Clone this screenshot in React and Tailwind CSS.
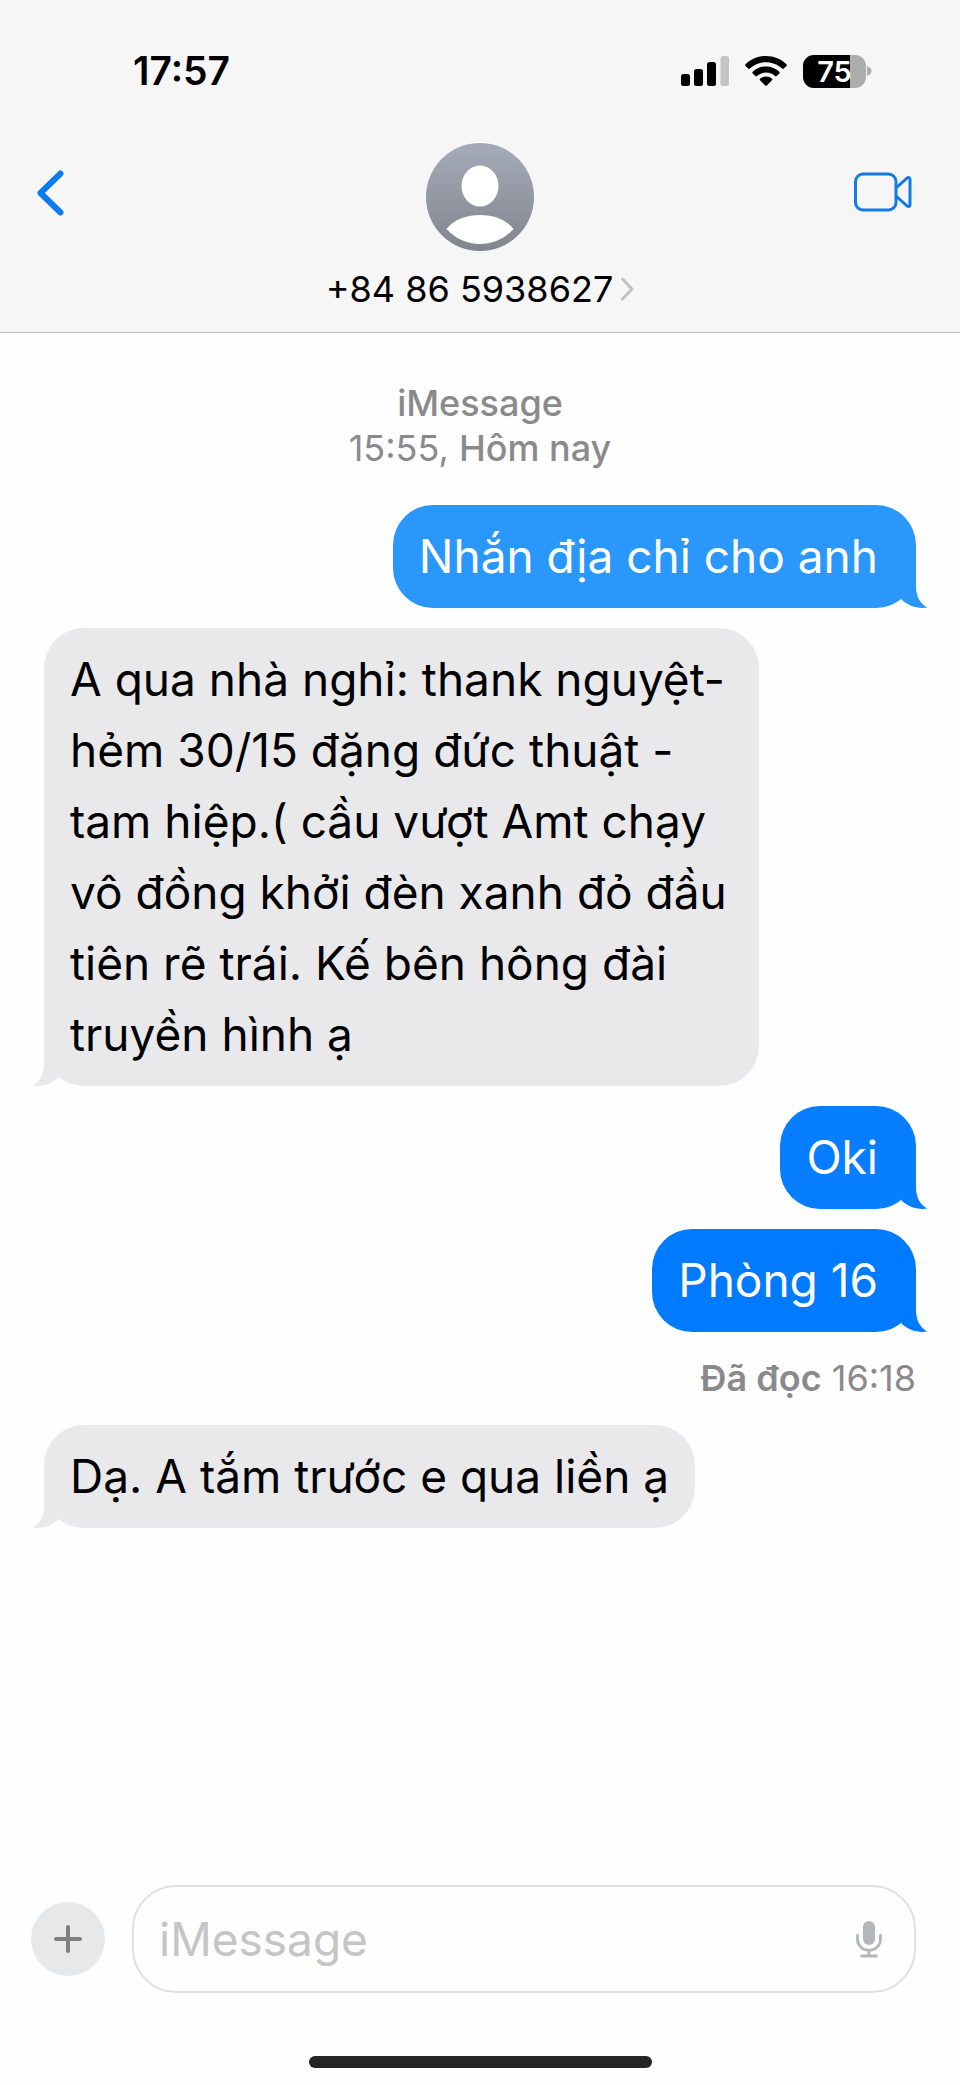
import React, { useState } from 'react';

const messages = [
  { id: 1, mine: true, text: 'Nhắn địa chỉ cho anh', color: 'bg-[#2997fc] text-[#2997fc]' },
  {
    id: 2,
    mine: false,
    text: 'A qua nhà nghỉ: thank nguyệt- hẻm 30/15 đặng đức thuật - tam hiệp.( cầu vượt Amt chạy vô đồng khởi đèn xanh đỏ đầu tiên rẽ trái. Kế bên hông đài truyền hình ạ',
  },
  { id: 3, mine: true, text: 'Oki', color: 'bg-[#077eff] text-[#077eff]' },
  { id: 4, mine: true, text: 'Phòng 16', color: 'bg-[#007aff] text-[#007aff]', readAt: '16:18' },
  { id: 5, mine: false, text: 'Dạ. A tắm trước e qua liền ạ' },
];

function SignalIcon() {
  return (
    <svg width="48" height="32" viewBox="0 0 48 32" aria-hidden="true">
      <rect x="0" y="19" width="9" height="12" rx="2.5" />
      <rect x="13" y="14" width="9" height="17" rx="2.5" />
      <rect x="26" y="7" width="9" height="24" rx="2.5" />
      <rect x="39.5" y="1" width="8.5" height="30" rx="2.5" fill="#c4c4c4" />
    </svg>
  );
}

function WifiIcon() {
  return (
    <svg width="42" height="32" viewBox="0 0 42 32" aria-hidden="true">
      <path d="M21 1C13 1 5.800 4.100.5 9.200c-.5.500-.5 1.200 0 1.700l2.700 2.700c.4.400 1.100.4 1.600 0C9.100 9.600 14.800 7.200 21 7.200s11.900 2.400 16.200 6.400c.5.400 1.200.4 1.600 0l2.700-2.700c.5-.5.5-1.200 0-1.700C36.200 4.100 29 1 21 1z" />
      <path d="M21 11.500c-5.200 0-9.900 2-13.300 5.300-.5.500-.5 1.200 0 1.700l2.700 2.600c.4.400 1.100.4 1.500 0 2.400-2.300 5.600-3.600 9.100-3.600s6.700 1.300 9.100 3.600c.4.400 1.100.4 1.500 0l2.700-2.600c.5-.5.5-1.200 0-1.700-3.400-3.300-8.100-5.300-13.300-5.300z" />
      <path d="M21 21.500c-2.300 0-4.400.8-6 2.200-.5.500-.5 1.100 0 1.600l5.200 5.200c.4.400 1.200.4 1.600 0l5.200-5.200c.5-.5.500-1.100 0-1.600-1.600-1.400-3.700-2.200-6-2.200z" />
    </svg>
  );
}

function Battery({ level }) {
  return (
    <div className="flex items-center gap-[1px]">
      <div className="relative flex h-[33px] w-[63px] items-center justify-center overflow-hidden rounded-[11px] bg-[#adadad]">
        <div className="absolute inset-y-0 left-0 bg-black" style={{ width: `${level}%` }}></div>
        <span className="relative text-[29px] leading-[33px] font-semibold text-white">{level}</span>
      </div>
      <svg width="5" height="12" viewBox="0 0 5 12" aria-hidden="true">
        <path d="M0 1c3 1 4.500 3 4.500 5S3 10 0 11z" fill="#adadad" />
      </svg>
    </div>
  );
}

function Avatar() {
  return (
    <svg width="108" height="108" viewBox="0 0 108 108" aria-hidden="true">
      <defs>
        <linearGradient id="avatar" x1="0" y1="0" x2="0" y2="1">
          <stop offset="0" stopColor="#a5abb9" />
          <stop offset="1" stopColor="#82858d" />
        </linearGradient>
      </defs>
      <circle cx="54" cy="54" r="54" fill="url(#avatar)" />
      <ellipse cx="54" cy="43" rx="18.500" ry="20.500" fill="#fff" />
      <path d="M20.500 86C27 77.500 39 72 54 72s27 5.500 33.500 14C79 95.500 67 101 54 101s-25-5.500-33.500-15z" fill="#fff" />
    </svg>
  );
}

function Tail({ mine }) {
  return (
    <svg
      width="52"
      height="40"
      viewBox="0 0 52 40"
      fill="currentColor"
      aria-hidden="true"
      className={mine ? 'absolute -right-3 bottom-0' : 'absolute bottom-0 -left-3 -scale-x-100'}
    >
      <path d="M20 0H40V18C40 28 44 36 51.500 39.500C42 41 32 38 25.500 31.500Z" />
    </svg>
  );
}

function Bubble({ message }) {
  const { mine, text, color } = message;
  return (
    <div
      className={
        mine
          ? `relative max-w-[82%] self-end rounded-[40px] py-4 pr-[38px] pl-[26px] ${color}`
          : 'relative max-w-[82%] self-start rounded-[40px] bg-[#e9e9eb] px-[26px] py-4 text-[#e9e9eb]'
      }
    >
      <Tail mine={mine} />
      <p className={mine ? 'relative text-[46px] leading-[71px] text-white' : 'relative text-[46px] leading-[71px] text-black'}>
        {text}
      </p>
    </div>
  );
}

export default function App() {
  const [draft, setDraft] = useState('');

  return (
    <div className="flex min-h-screen flex-col bg-[#fefefe] font-['Inter',sans-serif] text-black">
      <header className="border-b border-[#c0c0c2] bg-[#f6f6f6] pt-12 pb-5">
        {/* Status bar */}
        <div className="flex h-[46px] items-center justify-between pr-[88px] pl-[133px]">
          <span className="text-[39px] leading-[46px] font-semibold">17:57</span>
          <div className="flex items-center gap-4">
            <SignalIcon />
            <WifiIcon />
            <Battery level={75} />
          </div>
        </div>

        {/* Contact */}
        <div className="mt-[49px] grid grid-cols-[1fr_auto_1fr] items-start">
          <button type="button" aria-label="Quay lại" className="mt-[26px] ml-9 justify-self-start">
            <svg width="28" height="48" viewBox="0 0 28 48" fill="none" stroke="#0b7bf0" strokeWidth="6" strokeLinecap="round" strokeLinejoin="round">
              <path d="M24.500 4.500L4.500 24L24.500 43.500" />
            </svg>
          </button>
          <button type="button" className="flex flex-col items-center gap-[15px]">
            <Avatar />
            <span className="flex items-center gap-2 text-[36px] leading-[46px]">
              +84 86 5938627
              <svg width="13" height="24" viewBox="0 0 13 24" fill="none" stroke="#c2c2c4" strokeWidth="3" strokeLinecap="round" strokeLinejoin="round" aria-hidden="true">
                <path d="M1.500 2L11 12L1.500 22" />
              </svg>
            </span>
          </button>
          <button type="button" aria-label="Gọi video" className="mt-[29px] mr-12 justify-self-end">
            <svg width="58" height="40" viewBox="0 0 58 40" fill="none" stroke="#127be8" strokeWidth="3" strokeLinejoin="round">
              <rect x="1.500" y="2" width="40.500" height="36" rx="7.500" />
              <path d="M42 16L53 6.200c1.500-1.300 3-.7 3 1.300v25c0 2-1.500 2.600-3 1.300L42 24" />
            </svg>
          </button>
        </div>
      </header>

      <main className="flex flex-1 flex-col gap-5 px-11 pt-12 pb-[120px]">
        <p className="pb-[14px] text-center text-[36px] leading-[45px] text-[#8a8a8c]">
          <span className="font-medium">iMessage</span>
          <br />
          15:55, <span className="font-medium">Hôm nay</span>
        </p>
        {messages.map((message) => (
          <React.Fragment key={message.id}>
            <Bubble message={message} />
            {message.readAt && (
              <p className="py-1 text-right text-[36px] leading-[45px] text-[#8a8a8c]">
                <span className="font-semibold">Đã đọc</span> {message.readAt}
              </p>
            )}
          </React.Fragment>
        ))}
      </main>

      <footer className="flex flex-col pb-[17px]">
        <form className="flex items-center gap-[27px] pr-11 pl-[31px]" onSubmit={(e) => e.preventDefault()}>
          <button type="button" aria-label="Thêm" className="flex size-[74px] shrink-0 items-center justify-center rounded-full bg-[#e6e8ea]">
            <svg width="30" height="30" viewBox="0 0 30 30" stroke="#7e7e80" strokeWidth="4" strokeLinecap="round">
              <path d="M15 3v24M3 15h24" />
            </svg>
          </button>
          <div className="flex h-[108px] min-w-0 flex-1 items-center rounded-[44px] border-2 border-[#e0e0e0] pr-8 pl-[25px]">
            <input
              type="text"
              aria-label="iMessage"
              placeholder="iMessage"
              value={draft}
              onChange={(e) => setDraft(e.target.value)}
              className="h-[71px] min-w-0 flex-1 bg-transparent text-[46px] outline-none placeholder:text-[#c5c5c5]"
            />
            <button type="button" aria-label="Đọc chính tả">
              <svg width="26" height="38" viewBox="0 0 26 38" fill="none" stroke="#b3b6ba" strokeWidth="2.800" strokeLinecap="round">
                <rect x="7" y="1" width="12" height="24" rx="6" fill="#b3b6ba" stroke="none" />
                <path d="M1.500 15.500v3.500a11.500 11.500 0 0 0 23 0v-3.500M13 30.500V36M5.500 36h15" />
              </svg>
            </button>
          </div>
        </form>
        <div className="mt-[63px] h-3 w-[343px] self-center rounded-full bg-[#252525]"></div>
      </footer>
    </div>
  );
}
